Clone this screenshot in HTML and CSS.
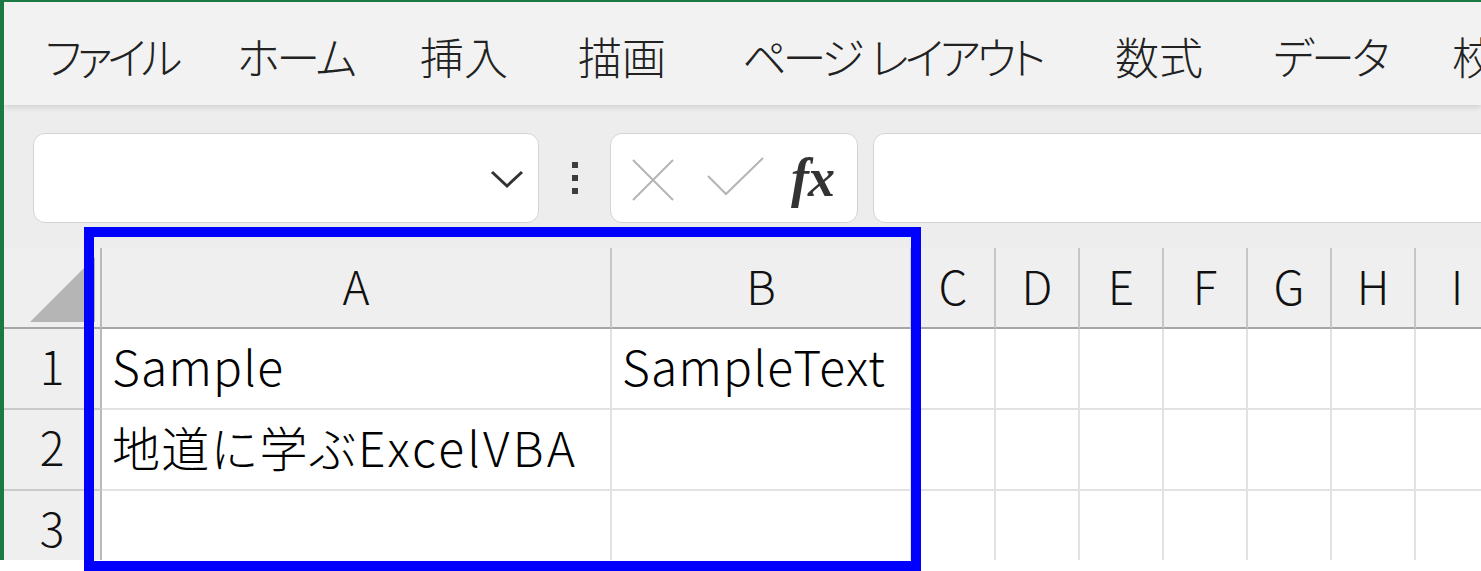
FILE: index.html
```html
<!DOCTYPE html>
<html lang="ja">
<head>
<meta charset="utf-8">
<title>Excel</title>
<link rel="stylesheet" href="styles.css">
</head>
<body>
<div class="page">
  <div class="window">
    <nav class="ribbon">
      <span class="tab t1 kana-tight">ファイル</span>
      <span class="tab t2 kana">ホーム</span>
      <span class="tab t3">挿入</span>
      <span class="tab t4">描画</span>
      <span class="tab t5 kana">ページ レイアウト</span>
      <span class="tab t6">数式</span>
      <span class="tab t7 kana">データ</span>
      <span class="tab t8">校閲</span>
    </nav>
    <div class="fbar">
      <div class="namebox">
        <svg class="chev" width="34" height="22" viewBox="0 0 34 22"><path d="M2 4 L17 18 L32 4" fill="none" stroke="#333" stroke-width="3"/></svg>
      </div>
      <div class="grip"><i></i><i></i><i></i></div>
      <div class="fxbox">
        <svg class="ico-x" width="42" height="42" viewBox="0 0 42 42"><path d="M1 1 L41 41 M41 1 L1 41" stroke="#b5b5b5" stroke-width="2" fill="none"/></svg>
        <svg class="ico-ok" width="58" height="42" viewBox="0 0 58 42"><path d="M1 20 L19 38 L56 2" stroke="#b5b5b5" stroke-width="2" fill="none"/></svg>
        <span class="fx">fx</span>
      </div>
      <div class="finput"></div>
    </div>
    <div class="sheet">
      <div class="corner"><span class="tri"></span></div>
      <div class="ch">A</div>
      <div class="ch">B</div>
      <div class="ch">C</div>
      <div class="ch">D</div>
      <div class="ch">E</div>
      <div class="ch">F</div>
      <div class="ch">G</div>
      <div class="ch">H</div>
      <div class="ch">I</div>

      <div class="rh">1</div>
      <div class="cell">Sample</div>
      <div class="cell">SampleText</div>
      <div class="cell"></div><div class="cell"></div><div class="cell"></div><div class="cell"></div><div class="cell"></div><div class="cell"></div><div class="cell"></div>

      <div class="rh">2</div>
      <div class="cell">地道に学ぶ<span class="latin">ExcelVBA</span></div>
      <div class="cell"></div>
      <div class="cell"></div><div class="cell"></div><div class="cell"></div><div class="cell"></div><div class="cell"></div><div class="cell"></div><div class="cell"></div>

      <div class="rh">3</div>
      <div class="cell"></div>
      <div class="cell"></div>
      <div class="cell"></div><div class="cell"></div><div class="cell"></div><div class="cell"></div><div class="cell"></div><div class="cell"></div><div class="cell"></div>
    </div>
  </div>
  <div class="selection"></div>
</div>
</body>
</html>
```

FILE: styles.css
```css
* { box-sizing: border-box; }
html, body { margin: 0; padding: 0; background: #ffffff; }
body { width: 1481px; height: 571px; overflow: hidden; font-family: "Noto Sans CJK JP", "Noto Sans", sans-serif; color: #222; }

.page { position: relative; width: 1481px; height: 571px; }

.window {
  width: 1481px;
  height: 560px;
  border-top: 2px solid #1b7a43;
  border-left: 4px solid #1b7a43;
  background: #efefef;
  overflow: hidden;
  display: flex;
  flex-direction: column;
}

/* ribbon tabs */
.ribbon {
  position: relative;
  z-index: 2;
  height: 103px;
  flex: none;
  background: #f2f2f2;
  box-shadow: 0 2px 6px rgba(0,0,0,0.13);
  display: flex;
  align-items: center;
  padding: 4px 0 0 41px;
  white-space: nowrap;
  overflow: hidden;
  font-size: 44px;
  font-weight: 300;
  font-feature-settings: "palt";
  color: #222;
}
.tab { flex: none; }
.kana { letter-spacing: -3px; }
.kana-tight { letter-spacing: -5px; }
.t1 { width: 192px; }
.t2 { width: 183px; }
.t3 { width: 158px; }
.t4 { width: 164px; }
.t5 { width: 373px; letter-spacing: -4px; word-spacing: 4px; }
.t6 { width: 158px; }
.t7 { width: 179px; }

/* formula bar */
.fbar {
  height: 143px;
  flex: none;
  display: flex;
  align-items: flex-start;
  padding: 28px 0 0 29px;
  background: #ededed;
}
.namebox {
  width: 506px;
  height: 90px;
  background: #fff;
  border: 1px solid #d4d4d4;
  border-radius: 12px;
  display: flex;
  align-items: center;
  justify-content: flex-end;
  padding-right: 14px;
}
.chev { display: block; margin-top: 2px; }
.grip {
  width: 71px;
  height: 90px;
  display: flex;
  flex-direction: column;
  align-items: center;
  justify-content: center;
  gap: 7px;
}
.grip i { display: block; width: 6px; height: 6px; background: #3c3c3c; }
.fxbox {
  width: 248px;
  height: 90px;
  background: #fff;
  border: 1px solid #d4d4d4;
  border-radius: 12px;
  display: flex;
  align-items: center;
  padding-left: 21px;
}
.ico-x { display: block; margin-top: 4px; }
.ico-ok { display: block; margin-left: 33px; margin-top: -2px; }
.fx {
  margin-left: 26px;
  font-family: "Liberation Serif", "DejaVu Serif", serif;
  font-style: italic;
  font-weight: bold;
  font-size: 54px;
  line-height: 1;
  letter-spacing: -1px;
  color: #333;
}
.finput {
  flex: 1;
  height: 90px;
  margin-left: 15px;
  margin-right: -20px;
  background: #fff;
  border: 1px solid #d4d4d4;
  border-radius: 12px;
}

/* sheet */
.sheet {
  flex: 1;
  display: grid;
  grid-template-columns: 98px 510px 300px repeat(7, 84px);
  grid-template-rows: 81px 81px 81px 81px;
  overflow: hidden;
  background: #fff;
}
.corner, .ch, .rh {
  background: #efefef;
}
.corner {
  position: relative;
  border-right: 2px solid #b9b9b9;
  border-bottom: 2px solid #a6a6a6;
}
.tri {
  position: absolute;
  right: 5px;
  bottom: 5px;
  width: 65px;
  height: 65px;
  background: #b5b5b5;
  clip-path: polygon(100% 0, 100% 100%, 0 100%);
}
.ch {
  border-right: 2px solid #c6c6c6;
  border-bottom: 2px solid #a6a6a6;
  display: flex;
  align-items: center;
  justify-content: center;
  padding-bottom: 5px;
  font-size: 46px;
  font-weight: 300;
  color: #111;
}
.rh {
  border-right: 2px solid #b9b9b9;
  border-bottom: 2px solid #cacaca;
  display: flex;
  align-items: center;
  justify-content: center;
  padding-bottom: 8px;
  font-size: 46px;
  font-weight: 300;
  color: #111;
}
.cell {
  border-right: 2px solid #e2e2e2;
  border-bottom: 2px solid #e2e2e2;
  display: flex;
  align-items: center;
  padding-left: 10px;
  padding-bottom: 8px;
  font-size: 48px;
  font-weight: 300;
  letter-spacing: 1.2px;
  color: #000;
  white-space: nowrap;
}
.latin { letter-spacing: 3.2px; }

/* selection highlight */
.selection {
  position: absolute;
  left: 84px;
  top: 227px;
  width: 837px;
  height: 344px;
  border: 10px solid #0000ff;
  pointer-events: none;
}
```
